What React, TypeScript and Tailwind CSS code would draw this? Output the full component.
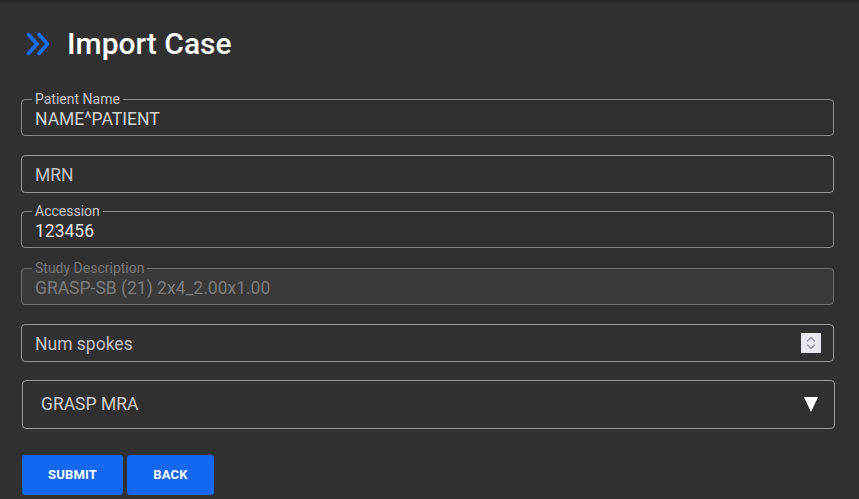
import React from "react";

const font = { fontFamily: "Roboto, 'Liberation Sans', Arial, sans-serif" };

function Labeled({ label, value, disabled, bright }: { label: string; value: string; disabled?: boolean; bright?: boolean }) {
  return (
    <fieldset
      className={
        "rounded-[4px] border " +
        (disabled ? "border-[#6f6f6f] bg-[#3a3a3a]" : "border-[#8a8a8a]")
      }
    >
      <legend
        className={
          "ml-[10px] px-[3px] text-[14px] leading-[14px] " +
          (disabled ? "text-[#767676]" : "text-[#c4c4c4]")
        }
      >
        {label}
      </legend>
      <div
        className={
          "h-[29px] pl-[13px] pt-[4px] text-[17.5px] leading-[19px] " +
          (disabled ? "text-[#7a7a7a]" : bright ? "text-[#e6e6e6]" : "text-[#d2d2d2]")
        }
      >
        {value}
      </div>
    </fieldset>
  );
}

function Plain({ placeholder, spinner }: { placeholder: string; spinner?: boolean }) {
  return (
    <div className="flex h-[38px] items-start justify-between rounded-[4px] border border-[#959595]">
      <div className="pl-[13px] pt-[10px] text-[17.5px] leading-[19px] text-[#c2c2c2]">{placeholder}</div>
      {spinner && (
        <div className="mr-[12px] mt-[8px] flex h-[20px] w-[20px] items-center justify-center bg-[#e9e7ef]">
          <svg width="12" height="16" viewBox="0 0 12 16" fill="none" stroke="#8f8da0" strokeWidth="1.3" strokeLinecap="round" strokeLinejoin="round">
            <path d="M2.5 6 L6 2.5 L9.5 6" />
            <path d="M2.5 10 L6 13.5 L9.5 10" />
          </svg>
        </div>
      )}
    </div>
  );
}

export default function App() {
  return (
    <div className="h-[499px] w-full overflow-hidden bg-[#303030]" style={font}>
      <div className="h-[4px] bg-gradient-to-b from-[#232323] to-[#303030]" />
      <div className="pl-[21px] pr-[25px]">
        <div className="mt-[22px] flex h-[36px] items-center">
          <svg className="ml-[5px]" width="24" height="24" viewBox="0 0 24 24" fill="none" stroke="#1a6cf3" strokeWidth="3.6" strokeLinecap="round" strokeLinejoin="round">
            <path d="M2.5 2.5 L11 12 L2.5 21.5" />
            <path d="M13 2.5 L21.5 12 L13 21.5" />
          </svg>
          <h1 className="ml-[17px] text-[30px] font-medium leading-[36px] text-white">Import Case</h1>
        </div>

        <div className="mt-[30px] flex flex-col">
          <Labeled label="Patient Name" value="NAME^PATIENT" />
          <div className="mt-[19px]">
            <Plain placeholder="MRN" />
          </div>
          <div className="mt-[11px]">
            <Labeled label="Accession" value="123456" bright />
          </div>
          <div className="mt-[13px]">
            <Labeled label="Study Description" value="GRASP-SB (21) 2x4_2.00x1.00" disabled />
          </div>
          <div className="mt-[19px]">
            <Plain placeholder="Num spokes" spinner />
          </div>
          <div className="-mr-[1px] ml-[1px] mt-[18px] flex h-[49px] items-center justify-between rounded-[4px] border border-[#9a9a9a]">
            <span className="pl-[18px] text-[17.5px] leading-[19px] text-[#cfcfcf]">GRASP MRA</span>
            <svg className="mr-[16px]" width="14" height="15" viewBox="0 0 14 15">
              <polygon points="0,0 14,0 7,15" fill="#ffffff" />
            </svg>
          </div>
          <div className="ml-[1px] mt-[26px] flex gap-[4px]">
            <button className="h-[40px] w-[101px] rounded-[3px] bg-[#1467f0] text-[13px] font-bold tracking-[0.2px] text-white">
              SUBMIT
            </button>
            <button className="h-[40px] w-[87px] rounded-[3px] bg-[#1467f0] text-[13px] font-bold tracking-[0.2px] text-white">
              BACK
            </button>
          </div>
        </div>
      </div>
    </div>
  );
}
